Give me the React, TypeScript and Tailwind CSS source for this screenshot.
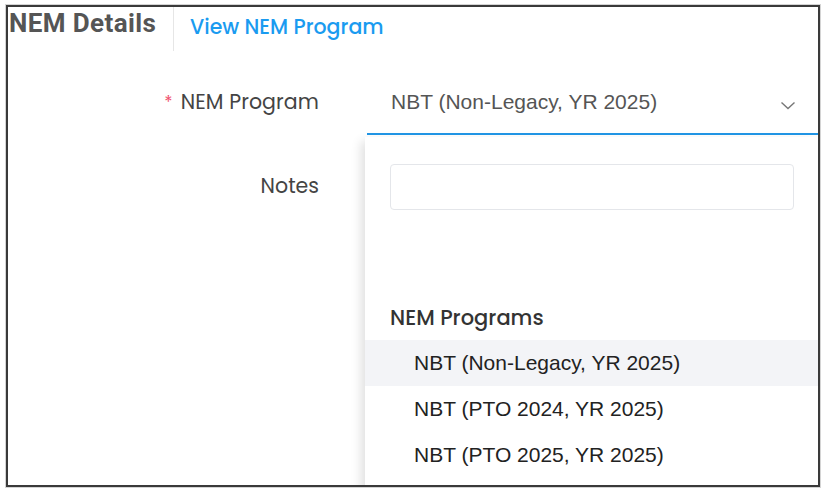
import { useState } from "react";

const OPTIONS = [
  "NBT (Non-Legacy, YR 2025)",
  "NBT (PTO 2024, YR 2025)",
  "NBT (PTO 2025, YR 2025)",
];

const poppins = "font-['Poppins','Inter','Noto_Sans',sans-serif]";
const arial = "font-['Liberation_Sans',Arial,sans-serif]";

export default function App() {
  const [selected] = useState(OPTIONS[0]);
  const [query, setQuery] = useState("");

  return (
    <div className="h-[495px] w-[826px] bg-white pl-[6px] pt-[5px]">
      <div className="relative h-[482px] w-[814px] overflow-hidden border-2 border-[#3a3a3a] bg-white shadow-[0_0_0_1px_#d4d4d4]">
        {/* header */}
        <div className="flex h-[44px] items-stretch">
          <div className="w-[166px] border-r border-[#e6e6e6] pl-[1px] pt-[1px]">
            <h2 className="font-['Roboto',sans-serif] text-[26px] font-bold leading-[30px] tracking-[0.4px] text-[#555]">
              NEM Details
            </h2>
          </div>
          <a
            href="#"
            className={`${poppins} pl-[16px] pt-[6px] text-[20.5px] font-medium leading-[28px] text-[#1a9bf0]`}
          >
            View NEM Program
          </a>
        </div>

        {/* form */}
        <div className="mt-[20px] grid grid-cols-[311px_1fr] gap-x-[48px]">
          <label className={`${poppins} flex h-[62px] items-start justify-end pt-[17px] text-[20.5px] leading-[28px] tracking-[0.1px] text-[#444]`}>
            <span className="mr-[8px] text-[17px] text-[#f0506e]">*</span>
            NEM Program
          </label>
          <div className="relative h-[64px] border-b-2 border-[#2196e6]">
            <div className="flex h-full items-start justify-between pl-[24px] pr-[22px] pt-[17px]">
              <span className={`${arial} text-[21px] leading-[28px] text-[#555]`}>{selected}</span>
              <svg width="16" height="10" viewBox="0 0 16 10" className="mt-[13px]" fill="none">
                <path d="M1.5 1.5 8 7.5l6.5-6" stroke="#777" strokeWidth="1.4" />
              </svg>
            </div>
          </div>

          <label className={`${poppins} flex justify-end pt-[37px] text-[20.5px] leading-[28px] text-[#444]`}>
            Notes
          </label>
          <div className="h-[120px]" />
        </div>

        {/* dropdown panel */}
        <div className="absolute left-[357px] right-0 top-[130px] h-[400px] bg-white shadow-[-4px_4px_10px_rgba(0,0,0,0.12)]">
          <div className="px-[25px] pt-[27px]">
            <input
              value={query}
              onChange={(e) => setQuery(e.target.value)}
              className="h-[46px] w-[404px] rounded-[4px] border border-[#e4e6ea] px-3 text-[16px] outline-none"
            />
          </div>
          <div className={`${poppins} mt-[94px] px-[25px] pb-[8px] text-[21px] font-medium leading-[28px] text-[#333]`}>
            NEM Programs
          </div>
          <ul>
            {OPTIONS.map((opt) => (
              <li
                key={opt}
                className={`${arial} flex h-[46px] items-center pl-[49px] text-[21px] text-[#222] ${
                  opt === selected ? "bg-[#f3f4f7]" : ""
                }`}
              >
                {opt}
              </li>
            ))}
          </ul>
        </div>
      </div>
    </div>
  );
}
